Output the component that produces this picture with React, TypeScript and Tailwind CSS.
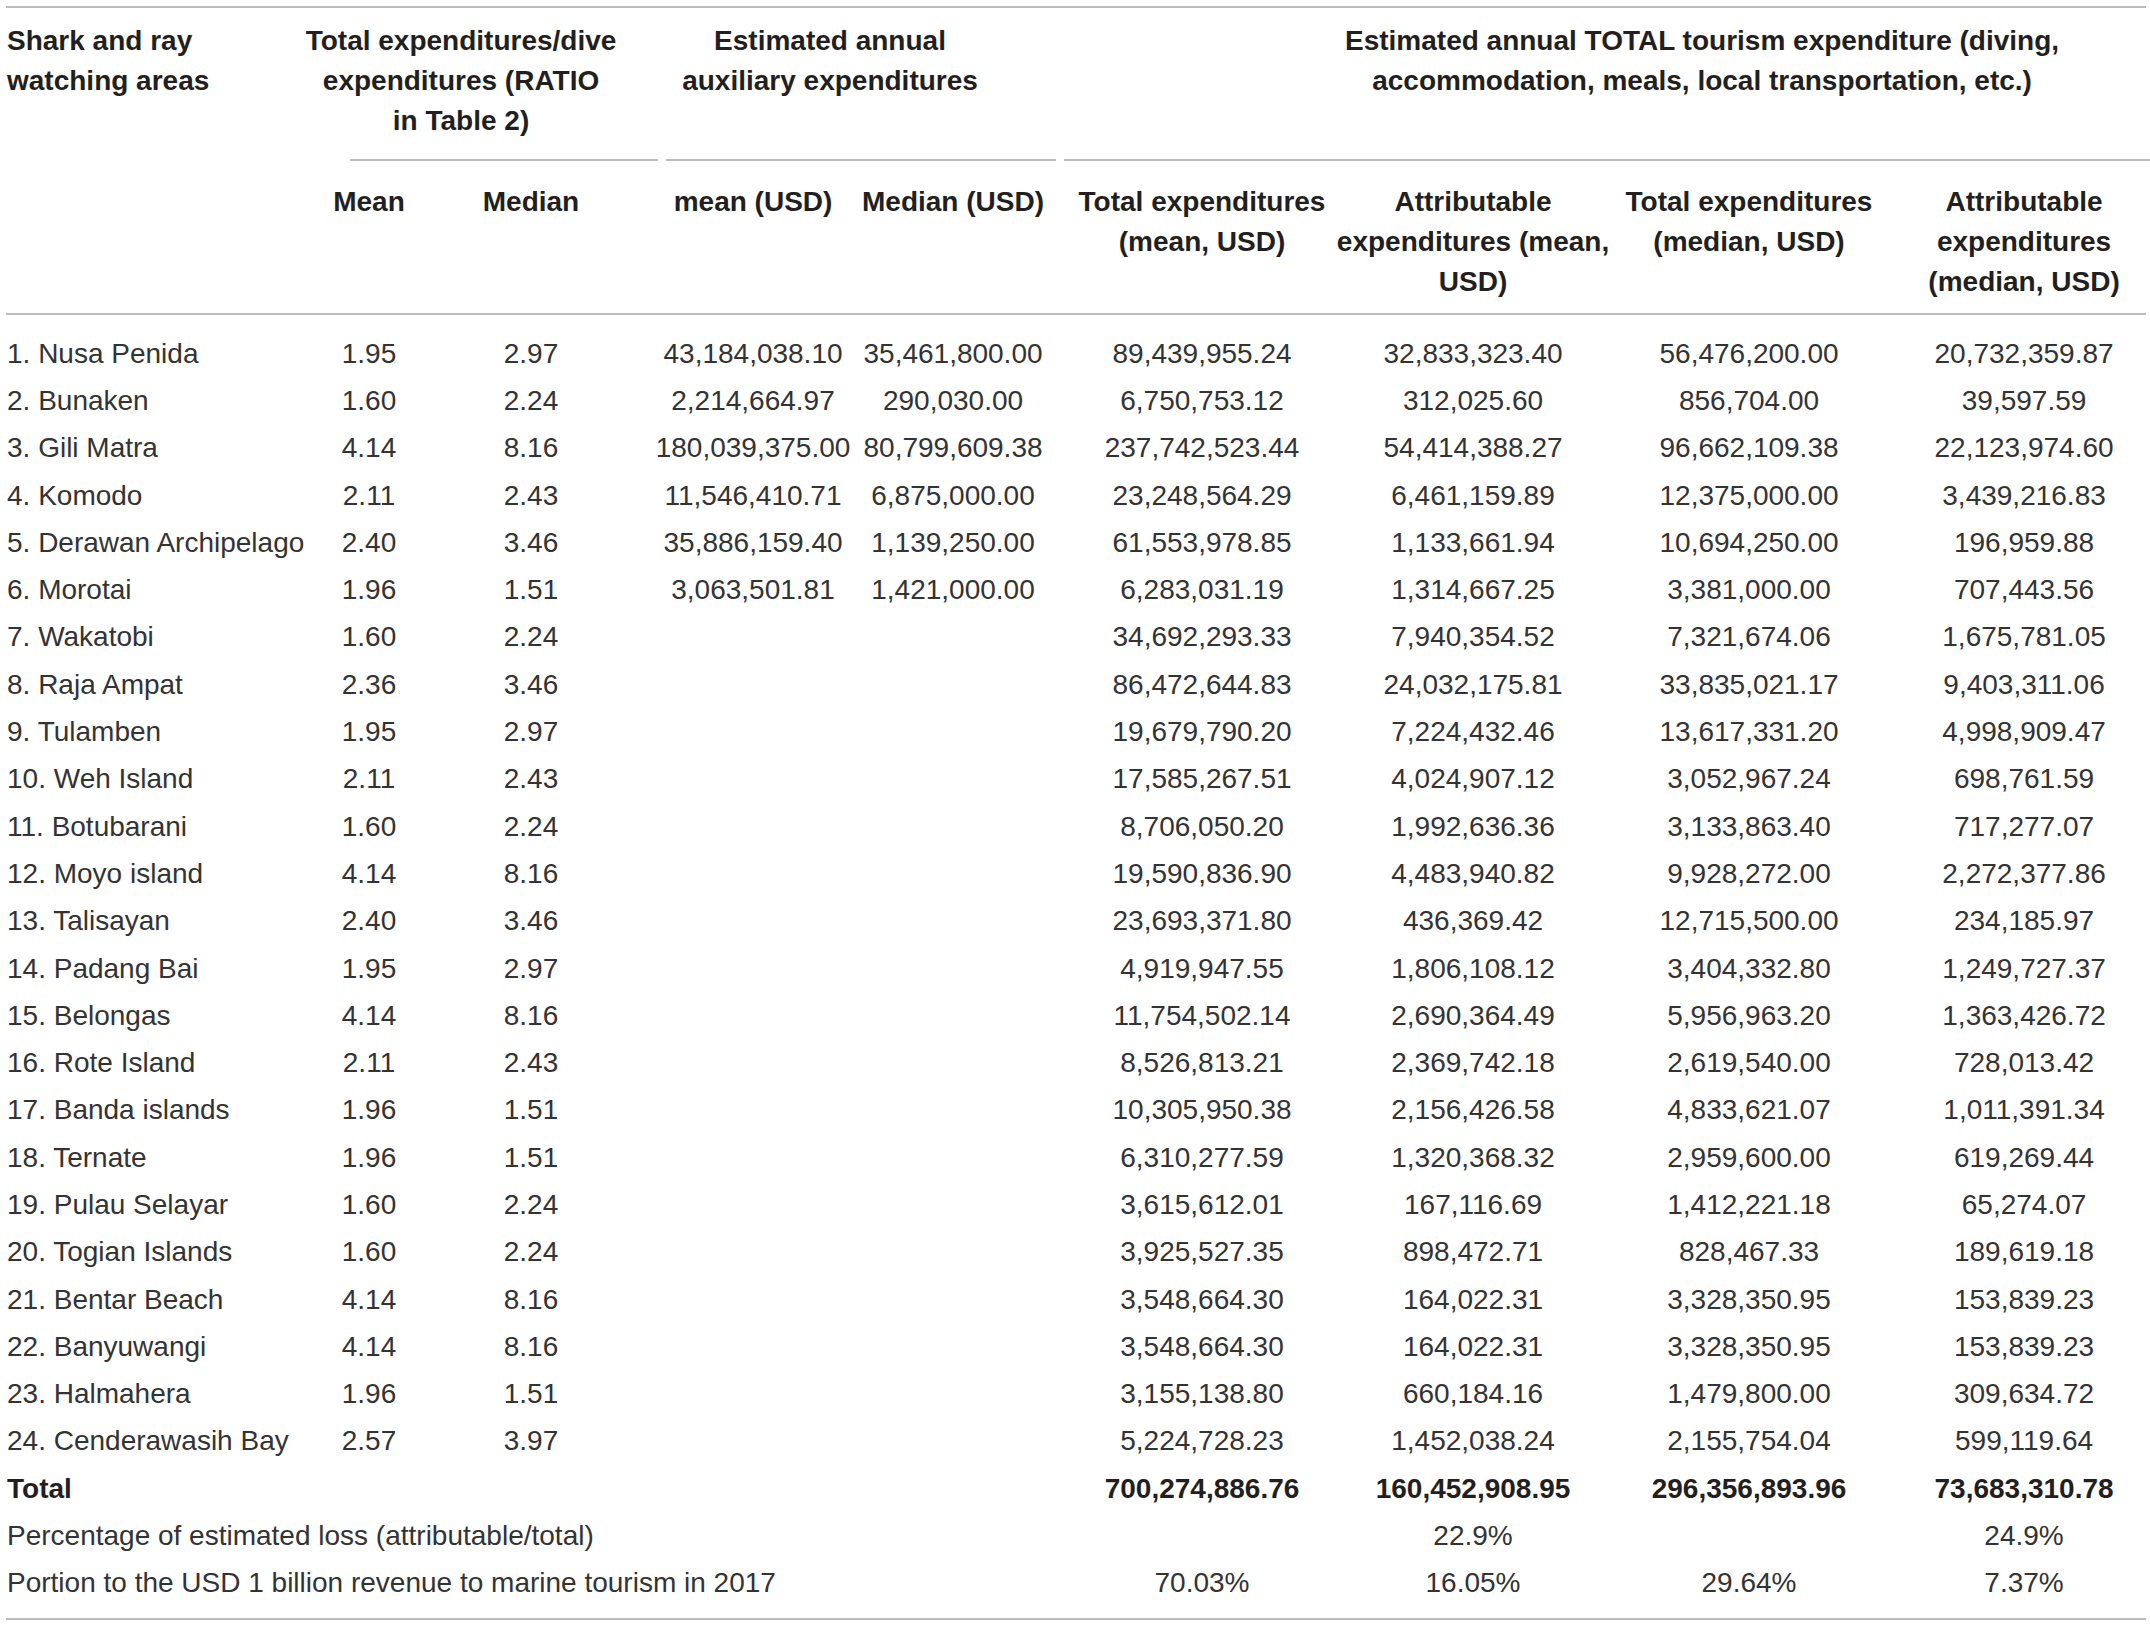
// Table: estimated annual tourism expenditure at shark and ray watching areas

type Row = [string, string, string, string, string, string, string, string, string];

const rows: Row[] = [
  ["1. Nusa Penida", "1.95", "2.97", "43,184,038.10", "35,461,800.00", "89,439,955.24", "32,833,323.40", "56,476,200.00", "20,732,359.87"],
  ["2. Bunaken", "1.60", "2.24", "2,214,664.97", "290,030.00", "6,750,753.12", "312,025.60", "856,704.00", "39,597.59"],
  ["3. Gili Matra", "4.14", "8.16", "180,039,375.00", "80,799,609.38", "237,742,523.44", "54,414,388.27", "96,662,109.38", "22,123,974.60"],
  ["4. Komodo", "2.11", "2.43", "11,546,410.71", "6,875,000.00", "23,248,564.29", "6,461,159.89", "12,375,000.00", "3,439,216.83"],
  ["5. Derawan Archipelago", "2.40", "3.46", "35,886,159.40", "1,139,250.00", "61,553,978.85", "1,133,661.94", "10,694,250.00", "196,959.88"],
  ["6. Morotai", "1.96", "1.51", "3,063,501.81", "1,421,000.00", "6,283,031.19", "1,314,667.25", "3,381,000.00", "707,443.56"],
  ["7. Wakatobi", "1.60", "2.24", "", "", "34,692,293.33", "7,940,354.52", "7,321,674.06", "1,675,781.05"],
  ["8. Raja Ampat", "2.36", "3.46", "", "", "86,472,644.83", "24,032,175.81", "33,835,021.17", "9,403,311.06"],
  ["9. Tulamben", "1.95", "2.97", "", "", "19,679,790.20", "7,224,432.46", "13,617,331.20", "4,998,909.47"],
  ["10. Weh Island", "2.11", "2.43", "", "", "17,585,267.51", "4,024,907.12", "3,052,967.24", "698,761.59"],
  ["11. Botubarani", "1.60", "2.24", "", "", "8,706,050.20", "1,992,636.36", "3,133,863.40", "717,277.07"],
  ["12. Moyo island", "4.14", "8.16", "", "", "19,590,836.90", "4,483,940.82", "9,928,272.00", "2,272,377.86"],
  ["13. Talisayan", "2.40", "3.46", "", "", "23,693,371.80", "436,369.42", "12,715,500.00", "234,185.97"],
  ["14. Padang Bai", "1.95", "2.97", "", "", "4,919,947.55", "1,806,108.12", "3,404,332.80", "1,249,727.37"],
  ["15. Belongas", "4.14", "8.16", "", "", "11,754,502.14", "2,690,364.49", "5,956,963.20", "1,363,426.72"],
  ["16. Rote Island", "2.11", "2.43", "", "", "8,526,813.21", "2,369,742.18", "2,619,540.00", "728,013.42"],
  ["17. Banda islands", "1.96", "1.51", "", "", "10,305,950.38", "2,156,426.58", "4,833,621.07", "1,011,391.34"],
  ["18. Ternate", "1.96", "1.51", "", "", "6,310,277.59", "1,320,368.32", "2,959,600.00", "619,269.44"],
  ["19. Pulau Selayar", "1.60", "2.24", "", "", "3,615,612.01", "167,116.69", "1,412,221.18", "65,274.07"],
  ["20. Togian Islands", "1.60", "2.24", "", "", "3,925,527.35", "898,472.71", "828,467.33", "189,619.18"],
  ["21. Bentar Beach", "4.14", "8.16", "", "", "3,548,664.30", "164,022.31", "3,328,350.95", "153,839.23"],
  ["22. Banyuwangi", "4.14", "8.16", "", "", "3,548,664.30", "164,022.31", "3,328,350.95", "153,839.23"],
  ["23. Halmahera", "1.96", "1.51", "", "", "3,155,138.80", "660,184.16", "1,479,800.00", "309,634.72"],
  ["24. Cenderawasih Bay", "2.57", "3.97", "", "", "5,224,728.23", "1,452,038.24", "2,155,754.04", "599,119.64"],
];

const subHeaders: string[][] = [
  ["Mean"],
  ["Median"],
  ["mean (USD)"],
  ["Median (USD)"],
  ["Total expenditures", "(mean, USD)"],
  ["Attributable", "expenditures (mean,", "USD)"],
  ["Total expenditures", "(median, USD)"],
  ["Attributable", "expenditures", "(median, USD)"],
];

function Lines({ lines }: { lines: string[] }) {
  return (
    <div className="flex flex-col items-center whitespace-nowrap">
      {lines.map((l) => (
        <span key={l}>{l}</span>
      ))}
    </div>
  );
}

function Num({ children, bold }: { children?: React.ReactNode; bold?: boolean }) {
  return (
    <td className={"h-[47.3px] p-0 text-center align-middle whitespace-nowrap " + (bold ? "font-bold text-[#231f20]" : "")}>
      {children}
    </td>
  );
}

export default function App() {
  return (
    <div className="w-[2150px] h-[1625px] bg-white pt-[6px] pl-[6px] font-['Liberation_Sans',Arial,sans-serif] text-[#333333]">
      <table className="table-fixed border-collapse w-[2140px] text-[28px] leading-[40px]">
        <colgroup>
          <col className="w-[324px]" />
          <col className="w-[78px]" />
          <col className="w-[246px]" />
          <col className="w-[198px]" />
          <col className="w-[202px]" />
          <col className="w-[296px]" />
          <col className="w-[246px]" />
          <col className="w-[306px]" />
          <col className="w-[244px]" />
        </colgroup>
        <thead className="font-bold text-[#231f20]">
          <tr className="border-t-2 border-[#bcbcbc]">
            <th rowSpan={2} className="p-0 pt-[13px] pl-[1px] text-left align-top border-b-2 border-[#bcbcbc]">
              Shark and ray
              <br />
              watching areas
            </th>
            <th colSpan={2} className="p-0 pt-[13px] align-top">
              <div className="ml-[20px] mr-[-4px] pr-[86px] pb-[18px] border-b-2 border-[#bcbcbc]">
                <Lines lines={["Total expenditures/dive", "expenditures (RATIO", "in Table 2)"]} />
              </div>
            </th>
            <th colSpan={2} className="p-0 pt-[13px] align-top">
              <div className="ml-[12px] mr-[-2px] pr-[62px] pb-[58px] border-b-2 border-[#bcbcbc]">
                <Lines lines={["Estimated annual", "auxiliary expenditures"]} />
              </div>
            </th>
            <th colSpan={4} className="p-0 pt-[13px] align-top">
              <div className="ml-[10px] mr-[-4px] pl-[190px] pb-[58px] border-b-2 border-[#bcbcbc]">
                <Lines
                  lines={[
                    "Estimated annual TOTAL tourism expenditure (diving,",
                    "accommodation, meals, local transportation, etc.)",
                  ]}
                />
              </div>
            </th>
          </tr>
          <tr className="border-b-2 border-[#bcbcbc]">
            {subHeaders.map((h, i) => (
              <th key={i} className="p-0 pt-[21px] pb-[11px] align-top">
                <div className="h-[120px]">
                  <Lines lines={h} />
                </div>
              </th>
            ))}
          </tr>
        </thead>
        <tbody>
          <tr>
            <td colSpan={9} className="h-[16px] p-0" />
          </tr>
          {rows.map((r) => (
            <tr key={r[0]}>
              <td className="h-[47.3px] p-0 pl-[1px] whitespace-nowrap align-middle">{r[0]}</td>
              {r.slice(1).map((v, i) => (
                <Num key={i}>{v}</Num>
              ))}
            </tr>
          ))}
          <tr>
            <td className="h-[47.3px] p-0 pl-[1px] font-bold text-[#231f20] align-middle">Total</td>
            <Num />
            <Num />
            <Num />
            <Num />
            <Num bold>700,274,886.76</Num>
            <Num bold>160,452,908.95</Num>
            <Num bold>296,356,893.96</Num>
            <Num bold>73,683,310.78</Num>
          </tr>
          <tr>
            <td colSpan={5} className="h-[47.3px] p-0 pl-[1px] whitespace-nowrap align-middle">
              Percentage of estimated loss (attributable/total)
            </td>
            <Num />
            <Num>22.9%</Num>
            <Num />
            <Num>24.9%</Num>
          </tr>
          <tr>
            <td colSpan={5} className="h-[47.3px] p-0 pl-[1px] whitespace-nowrap align-middle">
              Portion to the USD 1 billion revenue to marine tourism in 2017
            </td>
            <Num>70.03%</Num>
            <Num>16.05%</Num>
            <Num>29.64%</Num>
            <Num>7.37%</Num>
          </tr>
          <tr className="border-b-2 border-[#bcbcbc]">
            <td colSpan={9} className="h-[12px] p-0" />
          </tr>
        </tbody>
      </table>
    </div>
  );
}
